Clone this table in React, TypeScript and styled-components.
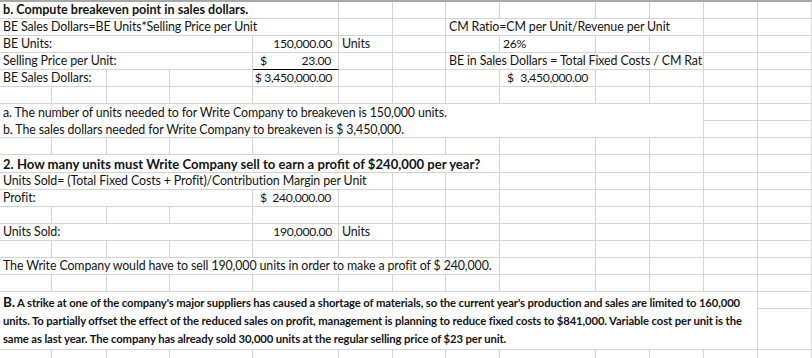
import styled, { createGlobalStyle } from "styled-components";

const COLS = [52, 55, 63, 83, 86, 54, 53, 54, 96, 54, 54, 54, 54];
const GRID = "#d4d4d4";

const GlobalStyle = createGlobalStyle`
  html, body {
    margin: 0;
    padding: 0;
    background: #ffffff;
  }
  body {
    font-family: Lato, "Liberation Sans", sans-serif;
    color: #141414;
  }
`;

const Sheet = styled.div`
  width: 812px;
  height: 358px;
  overflow: hidden;
  border-top: 2px solid #a8a8a8;
  box-sizing: border-box;
`;

const Row = styled.div<{ $rows?: number[] }>`
  display: grid;
  grid-template-columns: ${COLS.map((c) => `${c}px`).join(" ")};
  grid-template-rows: ${(p) => (p.$rows || [17]).map((r) => `${r}px`).join(" ")};
`;

const Cell = styled.div<{
  $span?: number;
  $rowSpan?: number;
  $align?: "left" | "right";
  $bold?: boolean;
  $size?: number;
  $under?: boolean;
}>`
  grid-column: span ${(p) => p.$span || 1};
  grid-row: span ${(p) => p.$rowSpan || 1};
  box-sizing: border-box;
  border-right: 1px solid ${GRID};
  border-bottom: 1px solid ${(p) => (p.$under ? "#000000" : GRID)};
  display: flex;
  align-items: flex-end;
  justify-content: ${(p) => (p.$align === "right" ? "flex-end" : "flex-start")};
  padding: 0 ${(p) => (p.$align === "right" ? "6px" : "3px")} 0 3px;
  font-size: ${(p) => p.$size || 12.4}px;
  font-weight: ${(p) => (p.$bold ? 700 : 400)};
  letter-spacing: ${(p) => (p.$bold ? 0 : -0.12)}px;
  line-height: 16px;
  white-space: nowrap;
  overflow: hidden;
  min-width: 0;
`;

const Money = styled(Cell)`
  justify-content: space-between;
  padding: 0 7px 0 7px;
`;

// Calibri figures are narrower than Lato's, so numbers get squeezed a bit
const Num = styled.span`
  font-size: 12.2px;
  letter-spacing: -0.35px;
`;

const Lines = styled(Cell)`
  flex-direction: column;
  align-items: flex-start;
  justify-content: flex-start;
  line-height: 17px;
`;

const Paragraph = styled(Cell)`
  flex-direction: column;
  align-items: flex-start;
  justify-content: flex-start;
  padding-top: 1px;
  line-height: 18px;
  font-size: 11.3px;
  font-weight: 700;
`;

const Big = styled.span`
  font-size: 13.5px;
`;

const blanks = (n: number) =>
  Array.from({ length: n }, (_, i) => <Cell key={i} />);

export default function App() {
  return (
    <>
      <GlobalStyle />
      <Sheet>
        <Row>
          <Cell $span={5} $bold $size={12.6}>
            b. Compute breakeven point in sales dollars.
          </Cell>
          {blanks(8)}
        </Row>
        <Row>
          <Cell $span={5}>BE Sales Dollars=BE Units*Selling Price per Unit</Cell>
          {blanks(2)}
          <Cell $span={4}>CM Ratio=CM per Unit/Revenue per Unit</Cell>
          {blanks(2)}
        </Row>
        <Row>
          <Cell $span={4}>BE Units:</Cell>
          <Cell $align="right">
            <Num>150,000.00</Num>
          </Cell>
          <Cell>Units</Cell>
          {blanks(2)}
          <Cell>
            <Num>26%</Num>
          </Cell>
          {blanks(4)}
        </Row>
        <Row>
          <Cell $span={4}>Selling Price per Unit:</Cell>
          <Money $under>
            <Num>$</Num>
            <Num>23.00</Num>
          </Money>
          {blanks(2)}
          <Cell $span={4}>BE in Sales Dollars = Total Fixed Costs / CM Ratio</Cell>
          {blanks(2)}
        </Row>
        <Row>
          <Cell $span={2}>BE Sales Dollars:</Cell>
          {blanks(2)}
          <Cell $align="right">
            <Num>$ 3,450,000.00</Num>
          </Cell>
          {blanks(3)}
          <Money>
            <Num>$</Num>
            <Num>3,450,000.00</Num>
          </Money>
          {blanks(4)}
        </Row>
        <Row>{blanks(13)}</Row>
        <Row $rows={[17, 17]}>
          <Lines $span={11} $rowSpan={2}>
            <span>a. The number of units needed to for Write Company to breakeven is 150,000 units.</span>
            <span>b. The sales dollars needed for Write Company to breakeven is $ 3,450,000.</span>
          </Lines>
          {blanks(4)}
        </Row>
        <Row>{blanks(13)}</Row>
        <Row $rows={[18]}>
          <Cell $span={8} $bold $size={13.1}>
            2. How many units must Write Company sell to earn a profit of $240,000 per year?
          </Cell>
          {blanks(5)}
        </Row>
        <Row>
          <Cell $span={6}>
            Units Sold= (Total Fixed Costs + Profit)/Contribution Margin per Unit
          </Cell>
          {blanks(7)}
        </Row>
        <Row>
          <Cell $span={4}>Profit:</Cell>
          <Money>
            <Num>$</Num>
            <Num>240,000.00</Num>
          </Money>
          {blanks(8)}
        </Row>
        <Row>{blanks(13)}</Row>
        <Row>
          <Cell $span={4}>Units Sold:</Cell>
          <Cell $align="right">
            <Num>190,000.00</Num>
          </Cell>
          <Cell>Units</Cell>
          {blanks(7)}
        </Row>
        <Row>{blanks(13)}</Row>
        <Row>
          <Cell $span={8}>
            The Write Company would have to sell 190,000 units in order to make a profit of $ 240,000.
          </Cell>
          {blanks(5)}
        </Row>
        <Row>{blanks(13)}</Row>
        <Row $rows={[17, 41]}>
          <Paragraph $span={12} $rowSpan={2}>
            <span>
              <Big>B.</Big> A strike at one of the company's major suppliers has caused a shortage of
              materials, so the current year's production and sales are limited to 160,000
            </span>
            <span>
              units. To partially offset the effect of the reduced sales on profit, management is
              planning to reduce fixed costs to $841,000. Variable cost per unit is the
            </span>
            <span>
              same as last year. The company has already sold 30,000 units at the regular selling
              price of $23 per unit.
            </span>
          </Paragraph>
          {blanks(2)}
        </Row>
        <Row>{blanks(13)}</Row>
      </Sheet>
    </>
  );
}
